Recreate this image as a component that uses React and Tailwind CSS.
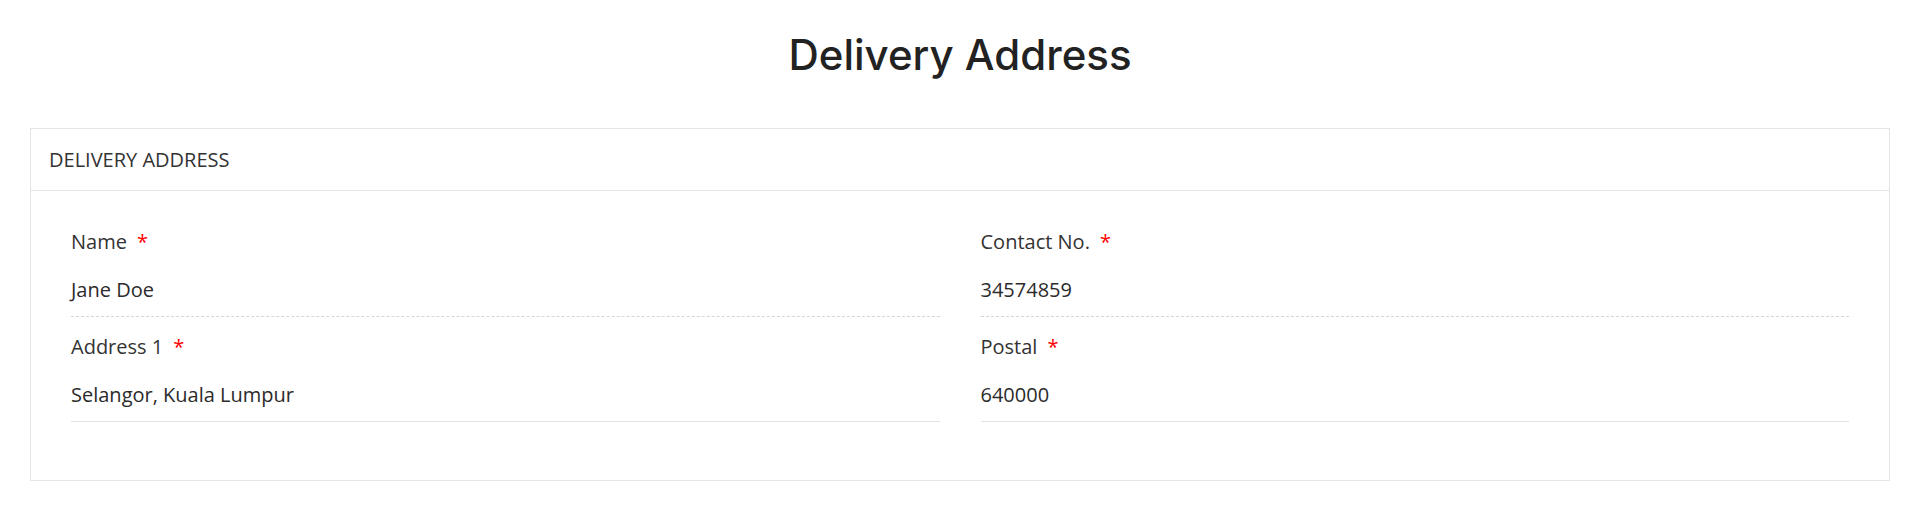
import React from 'react'

const fields = [
  { label: 'Name', value: 'Jane Doe', dashed: true },
  { label: 'Contact No.', value: '34574859', dashed: true },
  { label: 'Address 1', value: 'Selangor, Kuala Lumpur', dashed: false },
  { label: 'Postal', value: '640000', dashed: false },
]

function Field({ label, value, dashed }) {
  return (
    <div className="flex flex-col">
      <label className="text-[20px] leading-[26px] text-[#333]">
        {label}
        <span className="ml-[10px] text-[#ff0000]">*</span>
      </label>
      <div
        className={
          dashed
            ? 'mt-[22px] pb-[13px] text-[20px] leading-[26px] text-[#2b2b2b] border-b border-dashed border-[#d6d6d6]'
            : 'mt-[22px] pb-[13px] text-[20px] leading-[26px] text-[#2b2b2b] border-b border-solid border-[#e3e3e3]'
        }
      >
        {value}
      </div>
    </div>
  )
}

export default function App() {
  return (
    <div className="min-h-[508px] bg-white font-['Open_Sans',sans-serif]">
      {/* Page title */}
      <h1 className="pt-[30px] text-center font-['Inter',sans-serif] text-[42px] leading-[50px] font-medium text-[#222]">
        Delivery Address
      </h1>

      {/* Card */}
      <div className="mx-[30px] mt-[48px] border border-[#e6e6e6]">
        <div className="flex h-[62px] items-center border-b border-[#e6e6e6] pl-[18px]">
          <span className="text-[20px] leading-[24px] text-[#333]">DELIVERY ADDRESS</span>
        </div>
        <div className="grid grid-cols-2 gap-x-[41px] gap-y-[17px] px-10 pt-[38px] pb-[58px]">
          {fields.map(f => (
            <Field key={f.label} {...f} />
          ))}
        </div>
      </div>
    </div>
  )
}
